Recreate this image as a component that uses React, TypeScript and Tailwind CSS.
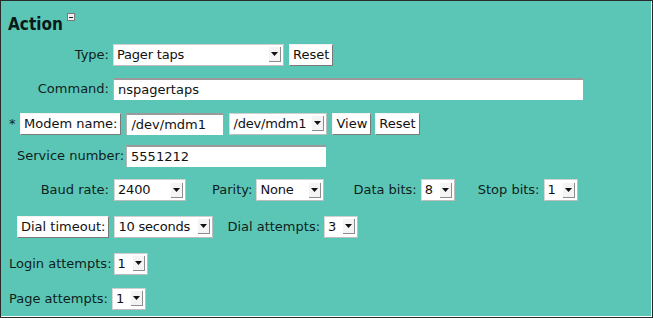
import type { ReactNode } from 'react';

const font = { fontFamily: '"DejaVu Sans", Verdana, sans-serif' };

function Arrow() {
  return (
    <span className="ml-auto mr-[2px] flex h-[15px] w-[12px] shrink-0 items-center justify-center border-r border-b border-[#8c8c8c] bg-[#f4f4f4]">
      <svg width="7" height="4" viewBox="0 0 7 4">
        <path d="M0 0h7L3.5 4z" fill="#111" />
      </svg>
    </span>
  );
}

function Select({ w, value }: { w: string; value: string }) {
  return (
    <div className={`flex h-[22px] ${w} items-center border border-t-[#d0d0d0] border-l-[#d8d8d8] border-b-[#bdbdbd] border-r-[#bdbdbd] bg-white pl-[3px] text-[13px] text-[#111]`}>
      <span className="whitespace-nowrap tracking-[-0.2px] pr-[3px]">{value}</span>
      <Arrow />
    </div>
  );
}

function Button({ children, cls = '' }: { children: ReactNode; cls?: string }) {
  return (
    <button className={`flex h-[22px] items-center border border-t-[#f2f2f2] border-l-[#f2f2f2] border-b-[#7a7a7a] border-r-[#7a7a7a] bg-white px-[3px] text-[13px] text-[#111] ${cls}`}>
      {children}
    </button>
  );
}

function Input({ w, value }: { w: string; value: string }) {
  return (
    <div className={`flex h-[22px] ${w} items-center border-t-2 border-l border-t-[#9a9a9a] border-l-[#b5b5b5] bg-white pl-[4px] text-[13px] text-[#111]`}>
      {value}
    </div>
  );
}

export default function App() {
  return (
    <div style={font} className="h-[318px] w-[653px] border border-[#2a2a2a] bg-[#5cc6b6] text-[13px] text-[#0e1e1c]">
      <div className="h-[316px] w-[651px] border-r border-b border-white">
        <div className="flex h-[42px] items-start pl-[7px] pt-[11px]">
          <span
            style={{ fontFamily: '"DejaVu Sans Condensed", "DejaVu Sans", sans-serif' }}
            className="text-[17px] font-bold text-[#0a1a18]"
          >
            Action
          </span>
          <span className="ml-[4px] mt-[1px] flex h-[8px] w-[8px] items-center justify-center border border-[#7a7a7a] bg-[#eee]">
            <span className="h-px w-[4px] bg-[#222]" />
          </span>
        </div>

        <div className="flex h-[23px] items-center">
          <span className="w-[108px] text-right">Type:</span>
          <span className="ml-[4px]"><Select w="w-[171px]" value="Pager taps" /></span>
          <Button cls="ml-[5px]">Reset</Button>
        </div>

        <div className="mt-[12px] flex h-[22px] items-center">
          <span className="w-[108px] text-right">Command:</span>
          <span className="ml-[4px]"><Input w="w-[470px]" value="nspagertaps" /></span>
        </div>

        <div className="mt-[12px] flex h-[23px] items-center pl-[8px]">
          <span className="w-[11px]">*</span>
          <Button>Modem name:</Button>
          <span className="ml-[5px]"><Input w="w-[97px]" value="/dev/mdm1" /></span>
          <span className="ml-[6px]"><Select w="w-[98px]" value="/dev/mdm1" /></span>
          <Button cls="ml-[5px]">View</Button>
          <Button cls="ml-[4px]">Reset</Button>
        </div>

        <div className="mt-[10px] flex h-[22px] items-center pl-[16px]">
          <span>Service number:</span>
          <span className="ml-[2px]"><Input w="w-[200px]" value="5551212" /></span>
        </div>

        <div className="mt-[12px] flex h-[22px] items-center">
          <span className="w-[108px] text-right">Baud rate:</span>
          <span className="ml-[5px]"><Select w="w-[72px]" value="2400" /></span>
          <span className="ml-[26px]">Parity:</span>
          <span className="ml-[4px]"><Select w="w-[68px]" value="None" /></span>
          <span className="ml-[29px]">Data bits:</span>
          <span className="ml-[4px]"><Select w="w-[34px]" value="8" /></span>
          <span className="ml-[23px]">Stop bits:</span>
          <span className="ml-[4px]"><Select w="w-[34px]" value="1" /></span>
        </div>

        <div className="mt-[14px] flex h-[23px] items-center pl-[16px]">
          <Button>Dial timeout:</Button>
          <span className="ml-[5px]"><Select w="w-[99px]" value="10 seconds" /></span>
          <span className="ml-[14px]">Dial attempts:</span>
          <span className="ml-[4px]"><Select w="w-[34px]" value="3" /></span>
        </div>

        <div className="mt-[14px] flex h-[23px] items-center pl-[8px]">
          <span>Login attempts:</span>
          <span className="ml-[2px]"><Select w="w-[34px]" value="1" /></span>
        </div>

        <div className="mt-[12px] flex h-[23px] items-center pl-[8px]">
          <span>Page attempts:</span>
          <span className="ml-[4px]"><Select w="w-[34px]" value="1" /></span>
        </div>
      </div>
    </div>
  );
}
